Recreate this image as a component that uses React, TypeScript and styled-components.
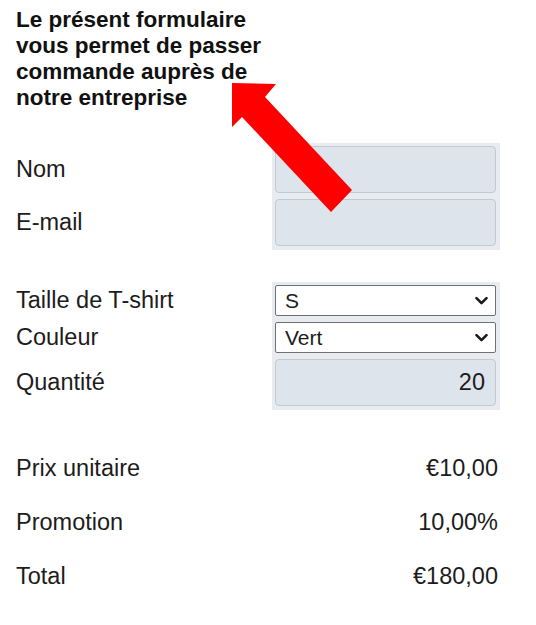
import React from "react";
import styled, { createGlobalStyle } from "styled-components";

const Global = createGlobalStyle`
  html, body { margin: 0; padding: 0; background: #ffffff; }
  body { font-family: "Liberation Sans", Arial, Helvetica, sans-serif; color: #1c1c1c; }
  * { box-sizing: border-box; }
`;

const Page = styled.main`
  position: relative;
  width: 536px;
  height: 625px;
  padding: 7px 36px 0 16px;
  display: flex;
  flex-direction: column;
  overflow: hidden;
`;

const Heading = styled.h1`
  margin: 0;
  width: 256px;
  font-size: 22.5px;
  line-height: 26px;
  font-weight: 700;
  color: #111111;
`;

const Group = styled.section<{ $mt: number }>`
  margin-top: ${(p) => p.$mt}px;
  display: grid;
  grid-template-columns: 256px 228px;
`;

const Column = styled.div`
  display: flex;
  flex-direction: column;
  gap: 6px;
  padding: 3px 4px 4px 3px;
`;

const LabelColumn = styled(Column)`
  padding-left: 0;
  padding-right: 0;
`;

const Panel = styled(Column)`
  background: #e8ebf0;
`;

const Label = styled.label<{ $h: number }>`
  height: ${(p) => p.$h}px;
  display: flex;
  align-items: center;
  font-size: 23.5px;
  color: #1c1c1c;
`;

const TextInput = styled.input<{ $align?: string }>`
  width: 100%;
  height: 47px;
  margin: 0;
  padding: 0 10px;
  background: #dee4ec;
  border: 1px solid #c3c9d1;
  border-radius: 4px;
  font-family: inherit;
  font-size: 23.5px;
  color: #1c1c1c;
  text-align: ${(p) => p.$align || "left"};
  outline: none;
`;

const SelectWrap = styled.div`
  position: relative;
  height: 31px;
`;

const Select = styled.select`
  appearance: none;
  -webkit-appearance: none;
  width: 100%;
  height: 100%;
  margin: 0;
  padding: 0 30px 0 9px;
  background: #ffffff;
  border: 1px solid #707070;
  border-radius: 2px;
  font-family: inherit;
  font-size: 21px;
  color: #1c1c1c;
  outline: none;
`;

const Chevron = styled.svg`
  position: absolute;
  right: 8px;
  top: 50%;
  transform: translateY(-50%);
  pointer-events: none;
`;

const Summary = styled.section`
  margin-top: 31px;
  display: flex;
  flex-direction: column;
  width: 484px;
`;

const SummaryRow = styled.div`
  height: 54px;
  display: flex;
  align-items: center;
  justify-content: space-between;
  padding-right: 2px;
  font-size: 23.5px;
  color: #1c1c1c;
`;

const ArrowLayer = styled.svg`
  position: absolute;
  left: 0;
  top: 0;
  pointer-events: none;
  z-index: 2;
`;

const SelectField: React.FC<{ id: string; value: string; options: string[] }> = ({ id, value, options }) => (
  <SelectWrap>
    <Select id={id} defaultValue={value}>
      {options.map((o) => (
        <option key={o} value={o}>
          {o}
        </option>
      ))}
    </Select>
    <Chevron width="13" height="9" viewBox="0 0 13 9">
      <path d="M1.5 1.6 L6.5 6.6 L11.5 1.6" fill="none" stroke="#1a1a1a" strokeWidth="2.6" strokeLinecap="round" strokeLinejoin="round" />
    </Chevron>
  </SelectWrap>
);

export default function App() {
  return (
    <>
      <Global />
      <Page>
        <Heading>Le présent formulaire vous permet de passer commande auprès de notre entreprise</Heading>

        <Group $mt={32}>
          <LabelColumn>
            <Label $h={47} htmlFor="nom">Nom</Label>
            <Label $h={47} htmlFor="email">E-mail</Label>
          </LabelColumn>
          <Panel>
            <TextInput id="nom" type="text" />
            <TextInput id="email" type="email" />
          </Panel>
        </Group>

        <Group $mt={32}>
          <LabelColumn>
            <Label $h={31} htmlFor="taille">Taille de T-shirt</Label>
            <Label $h={31} htmlFor="couleur">Couleur</Label>
            <Label $h={47} htmlFor="qte">Quantité</Label>
          </LabelColumn>
          <Panel>
            <SelectField id="taille" value="S" options={["S", "M", "L", "XL"]} />
            <SelectField id="couleur" value="Vert" options={["Vert", "Rouge", "Bleu"]} />
            <TextInput id="qte" type="text" defaultValue="20" $align="right" />
          </Panel>
        </Group>

        <Summary>
          <SummaryRow>
            <span>Prix unitaire</span>
            <span>€10,00</span>
          </SummaryRow>
          <SummaryRow>
            <span>Promotion</span>
            <span>10,00%</span>
          </SummaryRow>
          <SummaryRow>
            <span>Total</span>
            <span>€180,00</span>
          </SummaryRow>
        </Summary>

        <ArrowLayer width="536" height="625" viewBox="0 0 536 625">
          <polygon
            points="232,83 276,84 265,97 352,190 331,212 242,117 232,127"
            fill="#fe0000"
          />
        </ArrowLayer>
      </Page>
    </>
  );
}
